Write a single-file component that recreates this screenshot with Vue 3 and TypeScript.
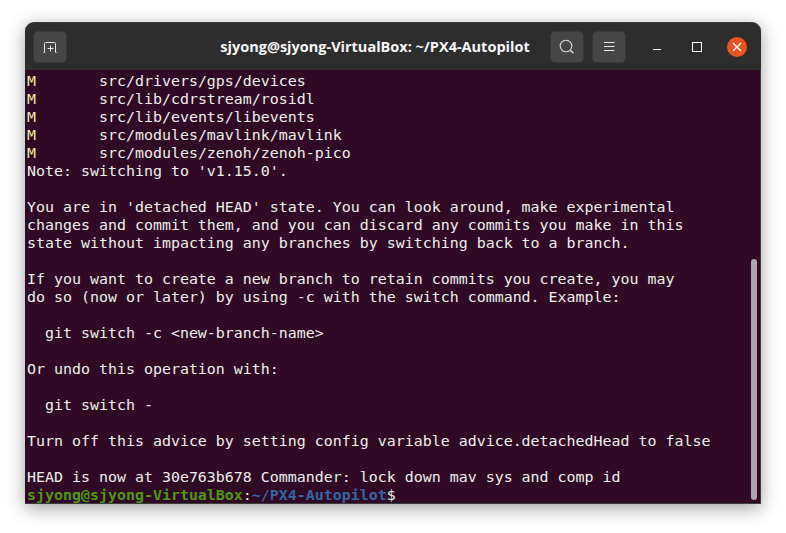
<script setup lang="ts">
const lines: string[] = [
  "Note: switching to 'v1.15.0'.",
  '',
  "You are in 'detached HEAD' state. You can look around, make experimental",
  'changes and commit them, and you can discard any commits you make in this',
  'state without impacting any branches by switching back to a branch.',
  '',
  'If you want to create a new branch to retain commits you create, you may',
  'do so (now or later) by using -c with the switch command. Example:',
  '',
  '  git switch -c <new-branch-name>',
  '',
  'Or undo this operation with:',
  '',
  '  git switch -',
  '',
  'Turn off this advice by setting config variable advice.detachedHead to false',
  '',
  'HEAD is now at 30e763b678 Commander: lock down mav sys and comp id',
]
const modified: string[] = [
  'src/drivers/gps/devices',
  'src/lib/cdrstream/rosidl',
  'src/lib/events/libevents',
  'src/modules/mavlink/mavlink',
  'src/modules/zenoh/zenoh-pico',
]
const gap = '       '
</script>

<template>
  <div class="page">
    <div class="window">
      <header class="bar">
        <button class="btn" aria-label="New tab">
          <svg width="16" height="16" viewBox="0 0 16 16" fill="none" stroke="#e6e6e6" stroke-width="1">
            <path d="M1.5 13.5h1v-9a1 1 0 0 1 1-1h9a1 1 0 0 1 1 1v9h1" />
            <path d="M8.5 6.5v6M5.5 9.5h6" />
          </svg>
        </button>
        <div class="title">sjyong@sjyong-VirtualBox: ~/PX4-Autopilot</div>
        <div class="actions">
          <button class="btn" aria-label="Search">
            <svg width="16" height="16" viewBox="0 0 16 16" fill="none" stroke="#dcdcdc">
              <circle cx="7" cy="7" r="5.8" stroke-width="1.1" />
              <path d="M11.3 11.3l3.2 3" stroke-width="1.5" />
            </svg>
          </button>
          <button class="btn" aria-label="Menu">
            <svg width="16" height="16" viewBox="0 0 16 16" fill="none" stroke="#e8e8e8" stroke-width="1">
              <path d="M3 3.5h10.5M3 7.5h10.5M3 11.5h10.5" />
            </svg>
          </button>
        </div>
        <div class="controls">
          <span class="ctl"><i class="min"></i></span>
          <span class="ctl"><i class="max"></i></span>
          <span class="ctl"><span class="close">
            <svg width="10" height="10" viewBox="0 0 10 10" stroke="#fff" stroke-width="1.4">
              <path d="M1 1l8 8M9 1l-8 8" />
            </svg>
          </span></span>
        </div>
      </header>
      <main class="term">
        <div v-for="m in modified" :key="m" class="line"><span class="flag">M</span>{{ gap }}{{ m }}</div>
        <div v-for="(l, i) in lines" :key="i" class="line">{{ l }}</div>
        <div class="line"><span class="user">sjyong@sjyong-VirtualBox</span>:<span class="path">~/PX4-Autopilot</span>$</div>
        <div class="thumb"></div>
      </main>
    </div>
  </div>
</template>

<style>
html, body { margin: 0; background: #fff; }
</style>

<style scoped>
.page {
  width: 786px;
  height: 533px;
  padding: 22px 25px 29px;
  box-sizing: border-box;
  overflow: hidden;
  background: #fff;
}
.window {
  width: 736px;
  height: 482px;
  display: flex;
  flex-direction: column;
  border-radius: 9px 9px 0 0;
  box-shadow: 0 4px 18px rgba(0, 0, 0, 0.38);
}
.bar {
  height: 48px;
  flex: none;
  box-sizing: border-box;
  background: #2d2d2d;
  display: flex;
  align-items: center;
  padding: 0 0 0 8px;
  border-top: 1px solid #3a3a3a;
  border-radius: 9px 9px 0 0;
}
.btn {
  width: 34px;
  height: 32px;
  padding: 0;
  box-sizing: border-box;
  border: 1px solid #383838;
  border-radius: 5px;
  background: #464646;
  display: flex;
  align-items: center;
  justify-content: center;
}
.title {
  flex: none;
  width: 483px;
  padding-left: 133px;
  box-sizing: border-box;
  text-align: center;
  color: #f6f6f6;
  font: 700 14.5px "Open Sans", sans-serif;
  white-space: nowrap;
}
.actions {
  display: flex;
  gap: 8px;
  flex: none;
}
.controls {
  display: flex;
  flex: none;
  margin-left: 11px;
}
.ctl {
  width: 40px;
  height: 40px;
  display: flex;
  align-items: center;
  justify-content: center;
}
.min {
  width: 8px;
  height: 1px;
  margin-top: 5px;
  border-top: 1px solid #fff;
  box-sizing: border-box;
}
.max {
  width: 8px;
  height: 8px;
  border: 1px solid #fff;
}
.close {
  width: 20px;
  height: 20px;
  border-radius: 50%;
  background: #e95420;
  display: flex;
  align-items: center;
  justify-content: center;
}
.term {
  position: relative;
  flex: 1;
  background: #300a24;
  padding: 2px 0 0 2px;
  border-right: 1px solid #3c3c3c;
  border-bottom: 1px solid #3c3c3c;
  color: #eeeeec;
  font: 400 14.95px/18px "DejaVu Sans Mono", monospace;
  overflow: hidden;
}
.line {
  height: 18px;
  white-space: pre;
}
.flag { color: #f3e9a8; }
.user { color: #4e9a06; font-weight: 700; }
.path { color: #3465a4; font-weight: 700; }
.thumb {
  position: absolute;
  right: 3px;
  top: 189px;
  bottom: 3px;
  width: 6px;
  border-radius: 3px;
  background: #aaa6a9;
}
</style>
